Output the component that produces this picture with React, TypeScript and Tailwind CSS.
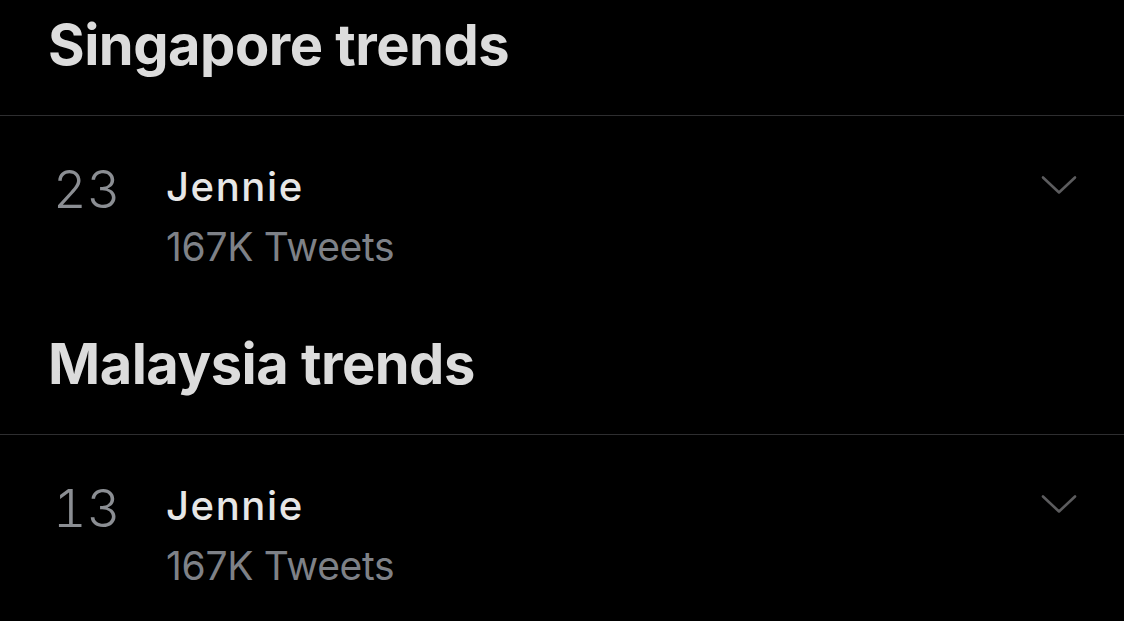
const trends = [
  { region: 'Singapore trends', rank: 23, name: 'Jennie', count: '167K Tweets' },
  { region: 'Malaysia trends', rank: 13, name: 'Jennie', count: '167K Tweets' },
]

function Chevron() {
  return (
    <svg width="36" height="20" viewBox="0 0 36 20" fill="none" className="shrink-0">
      <path d="M2 2.5 L18 17.5 L34 2.5" stroke="#5c5c5e" strokeWidth="2.6" strokeLinecap="round" strokeLinejoin="round" />
    </svg>
  )
}

export default function App() {
  return (
    <div
      className="min-h-[621px] w-full bg-black"
      style={{ fontFamily: 'Inter, "Noto Sans", sans-serif' }}
    >
      {trends.map((t, i) => (
        <section key={t.region}>
          <h2
            className={`px-[48px] pb-[42px] text-[56px] leading-[56px] font-bold tracking-[-0.5px] text-[#dcdcdc] ${
              i === 0 ? 'pt-[17px]' : 'pt-[70px]'
            }`}
          >
            {t.region}
          </h2>
          <div className="h-px bg-[#2e2e30]" />
          <div className="flex items-start pt-[51px] pl-[53px] pr-[47px]">
            <div className="w-[113px] -mt-[3px] text-[52px] leading-[52px] font-light tabular-nums text-[#8b8e93]">
              {t.rank}
            </div>
            <div className="flex-1">
              <div className="text-[40px] leading-[40px] font-medium tracking-[1.6px] text-[#e7e7e7]">{t.name}</div>
              <div className="mt-[20px] text-[39px] leading-[39px] font-normal tracking-[-0.3px] text-[#7e8187]">{t.count}</div>
            </div>
            <div className="mt-[8px]">
              <Chevron />
            </div>
          </div>
        </section>
      ))}
    </div>
  )
}
